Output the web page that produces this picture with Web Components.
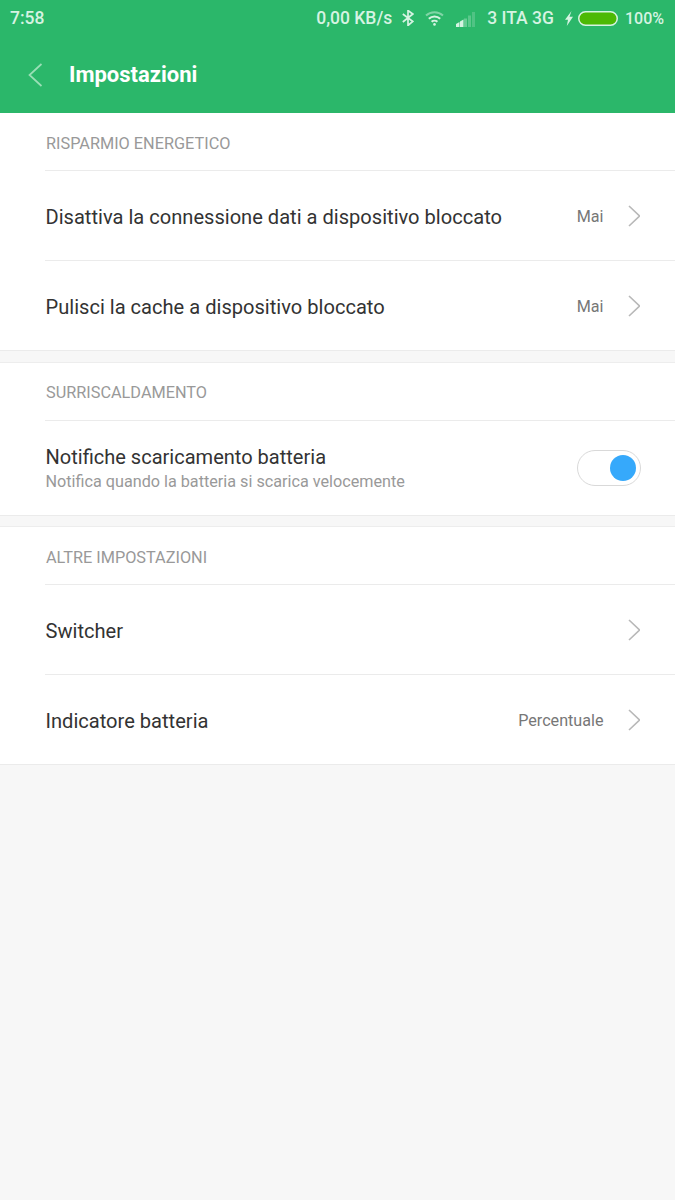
<!DOCTYPE html>
<html>
<head>
<meta charset="utf-8">
<style>
    html, body { margin: 0; padding: 0; }
    body { background: #f7f7f7; font-family: Roboto, sans-serif; height: 1200px; overflow: hidden; }
</style>
</head>
<body>
<app-header title="Impostazioni"></app-header>
<settings-section title="RISPARMIO ENERGETICO">
    <settings-row label="Disattiva la connessione dati a dispositivo bloccato" value="Mai"></settings-row>
    <settings-row label="Pulisci la cache a dispositivo bloccato" value="Mai" last></settings-row>
</settings-section>
<settings-section title="SURRISCALDAMENTO" style="--gap: 10px; --title-top: 19px">
    <toggle-row label="Notifiche scaricamento batteria" sub="Notifica quando la batteria si scarica velocemente"></toggle-row>
</settings-section>
<settings-section title="ALTRE IMPOSTAZIONI">
    <settings-row label="Switcher"></settings-row>
    <settings-row label="Indicatore batteria" value="Percentuale" last></settings-row>
</settings-section>

<script>
class AppHeader extends HTMLElement {
    constructor() {
        super();
        this.attachShadow({ mode: 'open' });
        this.shadowRoot.innerHTML = `
            <style>
                :host { display: block; height: 113px; background: #2bb76a; color: #fff; }
                .status {
                    height: 36px;
                    display: flex;
                    align-items: center;
                    padding: 0 11px 0 10px;
                    font-size: 17.5px;
                    font-weight: 500;
                    color: #d6f3e2;
                }
                .time { flex: 1; }
                .status svg { display: block; flex: none; }
                .bt { margin-left: 10px; }
                .wifi { margin-left: 11px; }
                .signal { margin-left: 12px; }
                .carrier { margin: 0 11px; }
                .battery { margin: 0 7px 0 5px; }
                .level { font-size: 16px; }
                .bar {
                    height: 77px;
                    display: flex;
                    align-items: center;
                }
                .back { margin-left: 28px; width: 16px; height: 26px; display: block; }
                h1 { margin: 0 0 0 25px; font-size: 22px; font-weight: 700; line-height: 26px; }
            </style>
            <div class="status">
                <span class="time">7:58</span>
                <span class="net">0,00 KB/s</span>
                <svg class="bt" width="12" height="16" viewBox="0 0 12 16" fill="none" stroke="#d6f3e2" stroke-width="1.7"><path d="M.8 4l10 7.500L6 15.500V.5L10.800 4 .8 12"/></svg>
                <svg class="wifi" width="19" height="15" viewBox="0 0 19 15" fill="none" stroke="#d6f3e2" stroke-width="2"><path d="M1 4.600a12.500 12.500 0 0 1 17 0" opacity=".5"/><path d="M3.800 7.800a8.300 8.300 0 0 1 11.400 0"/><path d="M6.600 10.800a4.200 4.200 0 0 1 5.800 0"/><circle cx="9.500" cy="13.400" r="1.300" fill="#d6f3e2" stroke="none"/></svg>
                <svg class="signal" width="20" height="17" viewBox="0 0 20 17" fill="#d6f3e2"><path d="M0 14l3.500-2v5H0z"/><path d="M4 11.500l3.500-2V17H4z"/><path d="M8 8.500h3V17H8z" opacity=".35"/><path d="M12 5.500h3V17h-3z" opacity=".28"/><path d="M16 2h3v15h-3z" opacity=".22"/></svg>
                <span class="carrier">3 ITA 3G</span>
                <svg width="8" height="15" viewBox="0 0 8 15" fill="#d6f3e2"><path d="M6.500 0L0 8.800h3L1.800 15 8 5.800H4.500z"/></svg>
                <svg class="battery" width="40" height="15" viewBox="0 0 40 15"><rect x=".75" y=".75" width="38.500" height="13.500" rx="6.750" fill="#4cb905" stroke="#d6f3e2" stroke-width="1.500"/></svg>
                <span class="level">100%</span>
            </div>
            <div class="bar">
                <svg class="back" viewBox="0 0 16 26" fill="none" stroke="#9adfb6" stroke-width="1.700"><path d="M13.500 2L1.500 13l12 11"/></svg>
                <h1></h1>
            </div>
        `;
    }

    connectedCallback() {
        this.shadowRoot.querySelector('h1').textContent = this.getAttribute('title');
    }
}

class SettingsSection extends HTMLElement {
    constructor() {
        super();
        this.attachShadow({ mode: 'open' });
        this.shadowRoot.innerHTML = `
            <style>
                :host {
                    display: block;
                    background: #fff;
                    border-top: 1px solid #ededed;
                    border-bottom: 1px solid #ebebeb;
                    margin-bottom: var(--gap, 11px);
                }
                :host(:first-of-type) { border-top: 0; }
                .title {
                    height: 58px;
                    margin-left: 45px;
                    box-sizing: border-box;
                    padding: var(--title-top, 20px) 0 0 1px;
                    border-bottom: 1px solid #ebebeb;
                    font-size: 16.3px;
                    line-height: 22px;
                    color: #999;
                }
            </style>
            <div class="title"></div>
            <slot></slot>
        `;
    }

    connectedCallback() {
        this.shadowRoot.querySelector('.title').textContent = this.getAttribute('title');
    }
}

class SettingsRow extends HTMLElement {
    constructor() {
        super();
        this.attachShadow({ mode: 'open' });
        this.shadowRoot.innerHTML = `
            <style>
                :host { display: block; padding-left: 45px; }
                .row {
                    height: 89px;
                    display: flex;
                    align-items: center;
                    padding-right: 35px;
                    border-bottom: 1px solid #ebebeb;
                }
                :host([last]) .row { border-bottom: 0; }
                .label { flex: 1; font-size: 20.1px; color: #333; padding: 2px 0 0 .5px; }
                .value { font-size: 16.15px; color: #777; margin-right: 23.5px; padding-top: 2px; }
                svg { display: block; width: 13px; height: 22px; }
            </style>
            <div class="row">
                <span class="label"></span>
                <span class="value"></span>
                <svg viewBox="0 0 13 22" fill="none" stroke="#b8b8b8" stroke-width="1.600"><path d="M2 1l10.500 10L2 21"/></svg>
            </div>
        `;
    }

    connectedCallback() {
        this.shadowRoot.querySelector('.label').textContent = this.getAttribute('label');
        this.shadowRoot.querySelector('.value').textContent = this.getAttribute('value') || '';
    }
}

class ToggleRow extends HTMLElement {
    constructor() {
        super();
        this.attachShadow({ mode: 'open' });
        this.shadowRoot.innerHTML = `
            <style>
                :host { display: block; padding-left: 45px; }
                .row {
                    height: 94px;
                    display: flex;
                    align-items: center;
                    padding-right: 34px;
                }
                .text { flex: 1; padding: 3px 0 0 .5px; }
                .label { font-size: 20.05px; line-height: 25px; color: #333; }
                .sub { font-size: 16.2px; line-height: 24px; color: #999; }
                .switch {
                    width: 58px;
                    height: 34px;
                    border: 1px solid #d9d9d9;
                    border-radius: 18px;
                    display: flex;
                    align-items: center;
                    justify-content: flex-end;
                    padding-right: 4px;
                }
                .knob { width: 26px; height: 26px; border-radius: 50%; background: #36a9fb; }
            </style>
            <div class="row">
                <div class="text">
                    <div class="label"></div>
                    <div class="sub"></div>
                </div>
                <div class="switch"><div class="knob"></div></div>
            </div>
        `;
    }

    connectedCallback() {
        this.shadowRoot.querySelector('.label').textContent = this.getAttribute('label');
        this.shadowRoot.querySelector('.sub').textContent = this.getAttribute('sub');
    }
}

customElements.define('app-header', AppHeader);
customElements.define('settings-section', SettingsSection);
customElements.define('settings-row', SettingsRow);
customElements.define('toggle-row', ToggleRow);
</script>
</body>
</html>
